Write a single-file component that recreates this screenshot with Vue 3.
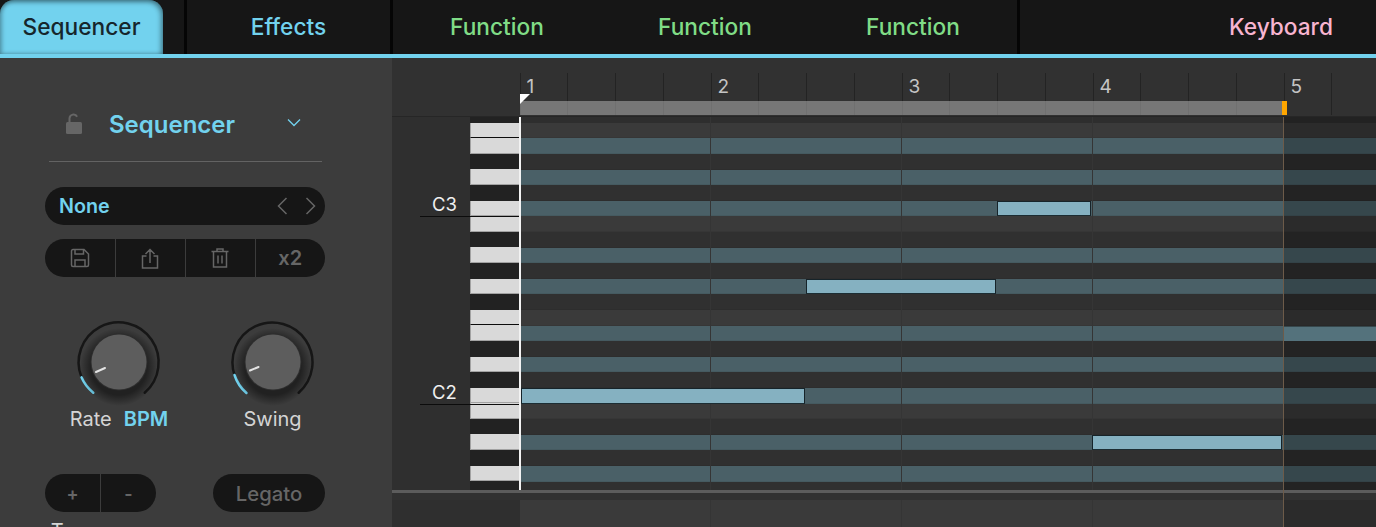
<script setup>
const pattern = ['l', 't', 'd', 't', 'd', 't', 'l', 'd', 't', 'd', 't', 'd']
const rows = [...pattern, ...pattern].map((type, i) => ({ type, edge: i % 12 === 0 }))
const ROW = 15.6
const notes = [
  { row: 5, left: 477, width: 94 },
  { row: 10, left: 286, width: 190 },
  { row: 17, left: 0.5, width: 284 },
  { row: 20, left: 572, width: 190 }
]
const noteStyle = n => ({ top: `${5.9 + n.row * ROW}px`, left: `${n.left}px`, width: `${n.width}px` })
const bars = [190, 381, 572]
const ticks = Array.from({ length: 18 }, (_, i) => ({ label: i % 4 === 0 ? i / 4 + 1 : '' }))
const knobs = [
  { id: 'rate', label: 'Rate', extra: 'BPM', value: 'M-25.7 30.7 A40 40 0 0 1 -37.5 15.3', track: 'M-37.5 15.3 A40 40 0 1 1 25.7 30.7', tick: [-23, 10, -14, 6] },
  { id: 'swing', label: 'Swing', extra: '', value: 'M-26.5 31 A40 40 0 0 1 -38.5 13', track: 'M-38.5 13 A40 40 0 1 1 25.7 30.7', tick: [-23, 8.5, -14.5, 5] }
]
</script>

<template>
  <div class="app">
    <header class="topbar">
      <div class="tab active">Sequencer</div>
      <div class="tab effects">Effects</div>
      <div class="functions">
        <div class="tab fn">Function</div>
        <div class="tab fn">Function</div>
        <div class="tab fn">Function</div>
      </div>
      <div class="tab keyboard">Keyboard</div>
    </header>

    <main class="body">
      <aside class="panel">
        <div class="head">
          <svg class="lock" width="16" height="21" viewBox="0 0 16 21">
            <path d="M3.5 9V5.5a4 4 0 0 1 7.6-1.7" fill="none" stroke="#666" stroke-width="2" />
            <rect x="0" y="9" width="16" height="12" rx="1.5" fill="#666" />
          </svg>
          <span class="title">Sequencer</span>
          <svg class="chev" width="14" height="9" viewBox="0 0 14 9">
            <path d="M1 1.5 7 7.5 13 1.5" fill="none" stroke="#72d2ee" stroke-width="1.3" />
          </svg>
        </div>

        <div class="pill preset">
          <span class="none">None</span>
          <svg width="11" height="18" viewBox="0 0 11 18" class="arrow-l"><path d="M9.5 1 1.5 9 9.5 17" fill="none" stroke="#666" stroke-width="1.5" /></svg>
          <svg width="11" height="18" viewBox="0 0 11 18" class="arrow-r"><path d="M1.5 1 9.5 9 1.5 17" fill="none" stroke="#666" stroke-width="1.5" /></svg>
        </div>

        <div class="pill tools">
          <div class="tool">
            <svg width="20" height="20" viewBox="0 0 20 20" fill="none" stroke="#666" stroke-width="1.5">
              <path d="M1.5 3a1.5 1.5 0 0 1 1.5-1.5h11l4.5 4.5v11a1.5 1.5 0 0 1-1.5 1.5H3A1.5 1.5 0 0 1 1.5 17z" />
              <path d="M5 1.5v4.5h8.5V2M5 18.5v-6.500h10v6.500" />
            </svg>
          </div>
          <div class="tool">
            <svg width="18" height="21" viewBox="0 0 18 21" fill="none" stroke="#666" stroke-width="1.5">
              <path d="M5.500 8H1.500v12h15V8h-4M9 15V1.500M4.500 6 9 1.500 13.500 6" />
            </svg>
          </div>
          <div class="tool">
            <svg width="18" height="20" viewBox="0 0 18 20" fill="none" stroke="#666" stroke-width="1.5">
              <path d="M0.500 3.500h17M6 3.500V1h6v2.500M2.500 3.500v15.500h13V3.500M7 7.500v8M11 7.500v8" />
            </svg>
          </div>
          <div class="tool x2">x2</div>
        </div>

        <div class="knobs">
          <div v-for="k in knobs" :key="k.id" class="knob-col">
            <svg width="90" height="90" viewBox="-45 -45 90 90">
              <defs>
                <radialGradient :id="k.id + '-shade'">
                  <stop offset="0.72" stop-color="#000" stop-opacity="0.45" />
                  <stop offset="1" stop-color="#000" stop-opacity="0" />
                </radialGradient>
              </defs>
              <path :d="k.track" fill="none" stroke="#161616" stroke-width="2.500" stroke-linecap="round" />
              <path :d="k.value" fill="none" stroke="#72d2ee" stroke-width="2.500" stroke-linecap="round" />
              <circle cx="0" cy="5" r="39" :fill="`url(#${k.id}-shade)`" />
              <circle cx="0" cy="0" r="28.500" fill="#2e2e2e" />
              <circle cx="0" cy="0" r="27.500" fill="#5d5d5d" />
              <line :x1="k.tick[0]" :y1="k.tick[1]" :x2="k.tick[2]" :y2="k.tick[3]" stroke="#e4e4e4" stroke-width="2" stroke-linecap="round" />
            </svg>
            <div class="knob-label">{{ k.label }}<b v-if="k.extra">{{ k.extra }}</b></div>
          </div>
        </div>

        <div class="bottom">
          <div class="bottom-col">
            <div class="pill plusminus">
              <div class="pm">+</div>
              <div class="pm">-</div>
            </div>
            <div class="transpose">Transpose</div>
          </div>
          <div class="pill legato">Legato</div>
        </div>
      </aside>

      <section class="editor">
        <div class="ruler">
          <div class="track">
            <div class="ticks">
              <div v-for="(t, i) in ticks" :key="i" class="tick"><span>{{ t.label }}</span></div>
            </div>
            <div class="loop"><i class="loop-end"></i></div>
            <i class="flag"></i>
          </div>
        </div>

        <div class="roll">
          <div class="gutter"></div>
          <div class="keys">
            <div v-for="(r, i) in rows" :key="i" class="key" :class="[r.type === 'd' ? 'black' : 'white', { edge: r.edge }]"></div>
          </div>
          <div class="grid">
            <div v-for="(r, i) in rows" :key="i" class="row" :class="r.type"></div>
            <i v-for="b in bars" :key="b" class="bar" :style="{ left: `${b}px` }"></i>
            <div v-for="(n, i) in notes" :key="i" class="note" :style="noteStyle(n)"></div>
            <div class="shade"></div>
            <div class="ghost"></div>
          </div>
          <div class="label c3">C3</div>
          <div class="label c2">C2</div>
          <i class="cursor"></i>
        </div>

        <div class="divider"></div>
        <div class="strip"></div>
        <div class="lane">
          <div class="lane-gutter"></div>
          <div class="lane-grid">
            <i v-for="b in bars" :key="b" class="bar" :style="{ left: `${b}px` }"></i>
            <div class="shade"></div>
          </div>
        </div>
        <i class="end-line"></i>
      </section>
    </main>
  </div>
</template>

<style>
html, body { margin: 0; background: #3c3c3c; }
</style>

<style scoped>
* { box-sizing: border-box; }
i { display: block; }
.app {
  width: 1376px;
  height: 527px;
  overflow: hidden;
  display: flex;
  flex-direction: column;
  font-family: Inter, "Liberation Sans", sans-serif;
  background: #3c3c3c;
}
.topbar {
  height: 58px;
  flex: none;
  display: flex;
  background: #161616;
  border-bottom: 4px solid #72d2ee;
}
.tab {
  height: 54px;
  padding-bottom: 2px;
  display: flex;
  align-items: center;
  justify-content: center;
  font-size: 22.700px;
  font-weight: 500;
}
.active {
  width: 163px;
  background: #72d2ee;
  color: #16262c;
  border-radius: 14px 14px 0 0;
  box-shadow: inset -2px 2px 5px rgba(0, 0, 0, 0.4), inset 2px 0 4px rgba(0, 0, 0, 0.25);
}
.effects {
  width: 209px;
  margin-left: 21px;
  border-left: 3px solid #050505;
  border-right: 3px solid #050505;
  color: #72d2ee;
}
.functions {
  width: 627px;
  display: flex;
  border-right: 3px solid #050505;
}
.fn { width: 208px; color: #80dc86; }
.keyboard { width: 190px; margin-left: auto; color: #f8b4d0; }

.body { flex: 1; display: flex; min-height: 0; }
.panel {
  width: 392px;
  flex: none;
  padding: 28px 0 0 45px;
  background: #3c3c3c;
}
.head {
  width: 273px;
  height: 76px;
  margin-left: 4px;
  padding: 0 21px 0 17px;
  display: flex;
  align-items: center;
  border-bottom: 1px solid #636363;
}
.title { margin: 1px 0 0 27px; font-size: 24px; font-weight: 600; color: #72d2ee; }
.chev { margin-left: auto; margin-top: -3px; }
.pill {
  height: 38px;
  border-radius: 19px;
  background: #161616;
  display: flex;
  align-items: center;
}
.preset { width: 280px; margin-top: 25px; padding: 0 9px 0 14px; }
.none { font-size: 19.700px; font-weight: 600; color: #72d2ee; margin-right: auto; }
.arrow-r { margin-left: 17px; }
.tools { width: 280px; margin-top: 14px; }
.tool {
  width: 70px;
  height: 100%;
  display: flex;
  align-items: center;
  justify-content: center;
  border-left: 1px solid #3c3c3c;
}
.tool:first-child { border-left: 0; width: 69.500px; }
.tool:last-child { flex: 1; }
.x2 { font-size: 20px; font-weight: 600; color: #666; }
.knobs { display: flex; margin: 40px 0 0 24px; gap: 53.500px; }
.knob-col { width: 100px; display: flex; flex-direction: column; align-items: center; }
.knob-col svg { display: block; }
.knob-label { height: 24px; line-height: 24px; font-size: 20px; color: #d4d4d4; white-space: nowrap; }
.knob-label b { margin-left: 12px; font-weight: 600; color: #72d2ee; }
.bottom { width: 280px; margin-top: 43px; display: flex; justify-content: space-between; align-items: flex-start; }
.bottom-col { width: 111px; }
.plusminus { width: 111px; }
.pm {
  flex: 1;
  height: 100%;
  display: flex;
  align-items: center;
  justify-content: center;
  font-size: 18px;
  font-weight: 600;
  color: #666;
}
.pm + .pm { border-left: 1px solid #3c3c3c; }
.transpose { margin-top: 7px; line-height: 24px; font-size: 20px; color: #d4d4d4; text-align: center; }
.legato { width: 112px; justify-content: center; font-size: 20.300px; font-weight: 500; color: #666; }

.editor { flex: 1; position: relative; display: flex; flex-direction: column; min-width: 0; background: #313131; }
.ruler {
  height: 59px;
  flex: none;
  padding: 15px 0 0 127.500px;
  background: #313131;
  border-bottom: 1px solid #262626;
}
.track { position: relative; height: 42px; }
.ticks { display: flex; height: 42px; overflow: hidden; }
.tick {
  width: 47.750px;
  flex: none;
  border-left: 1px solid #232323;
  color: #c4c4c4;
  font-size: 19px;
  line-height: 28px;
  padding-left: 6px;
  white-space: nowrap;
}
.loop {
  position: absolute;
  left: 0.500px;
  top: 28px;
  width: 767px;
  height: 14px;
  background: rgba(190, 190, 190, 0.5);
}
.loop-end { position: absolute; right: 0; top: 0; width: 5.500px; height: 14px; background: #ffa600; }
.flag {
  position: absolute;
  left: 0.500px;
  top: 21px;
  width: 0;
  height: 0;
  border-top: 10px solid #fff;
  border-right: 10px solid transparent;
}
.roll { position: relative; height: 373px; flex: none; display: flex; overflow: hidden; }
.gutter { width: 78px; flex: none; background: #2f2f2f; }
.keys { width: 50px; flex: none; padding-top: 5.600px; background: #222; }
.key { height: 15.600px; }
.white { background: #d9d9d9; border-bottom: 1px solid #a2a2a2; border-left: 1px solid #a2a2a2; }
.white.edge { border-bottom: 1px solid #0c0c0c; }
.black { background: #222; }
.grid { position: relative; flex: 1; padding-top: 5.900px; background: #2e2e2e; overflow: hidden; }
.row { height: 15.600px; border-bottom: 1px solid rgba(0, 0, 0, 0.06); }
.row.l { background: #3a3a3a; }
.row.t { background: #4a6067; }
.row.d { background: #303030; }
.bar { position: absolute; top: 0; bottom: 0; width: 1px; background: #353535; }
.note {
  position: absolute;
  height: 15.600px;
  background: #85b1c1;
  border: 1px solid #16242a;
  border-bottom-color: #1c2d33;
}
.shade {
  position: absolute;
  left: 764px;
  right: 0;
  top: 0;
  bottom: 0;
  background: rgba(0, 0, 0, 0.26);
}
.ghost {
  position: absolute;
  left: 764px;
  right: 0;
  top: 210px;
  height: 13.500px;
  background: #54727c;
}
.label {
  position: absolute;
  left: 28px;
  width: 100px;
  height: 25px;
  border-bottom: 1px solid #0c0c0c;
  padding-left: 12px;
  font-size: 18.500px;
  line-height: 24px;
  color: #f0f0f0;
}
.c3 { top: 74.500px; }
.c2 { top: 262.500px; }
.cursor { position: absolute; left: 127px; top: 0; bottom: 0; width: 2px; background: #f2f2f2; }
.divider { height: 3px; flex: none; background: #5c5c5c; }
.strip { height: 7px; flex: none; background: #313131; }
.lane { flex: 1; display: flex; min-height: 0; }
.lane-gutter { width: 128px; flex: none; background: #2f2f2f; }
.lane-grid { position: relative; flex: 1; background: #3a3a3a; }
.end-line {
  position: absolute;
  left: 891px;
  top: 59px;
  bottom: 0;
  width: 1px;
  background: #6d5b49;
}
</style>
